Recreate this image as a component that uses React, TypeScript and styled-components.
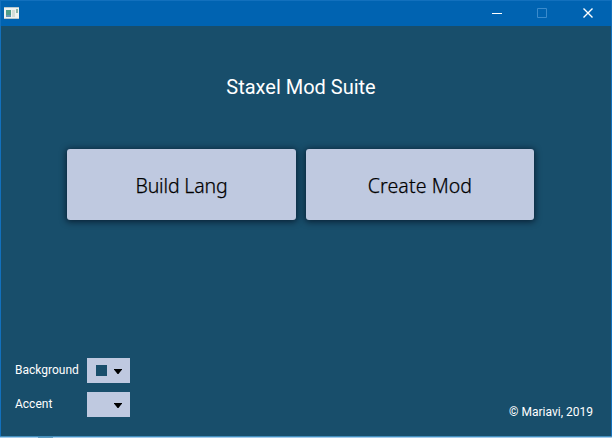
import React from 'react';
import styled, { createGlobalStyle } from 'styled-components';

const Global = createGlobalStyle`
  * { box-sizing: border-box; }
  body { margin: 0; overflow: hidden; background: #184e6b; }
`;

const Window = styled.div`
  width: 612px;
  height: 438px;
  display: flex;
  flex-direction: column;
  background: #184e6b;
  border: 1px solid #1270bd;
  border-bottom: 0;
  font-family: Roboto, sans-serif;
  color: #fff;
`;

const TitleBar = styled.header`
  height: 25px;
  flex: none;
  display: flex;
  align-items: center;
  justify-content: space-between;
  padding: 0 13px 1px 3px;
  background: #0063b1;
`;

const Controls = styled.div`
  display: flex;
  gap: 25px;
`;

const ControlButton = styled.button`
  width: 20px;
  height: 20px;
  padding: 0;
  border: 0;
  background: none;
  svg { display: block; }
  &:last-child { margin-left: 1px; }
`;

const Main = styled.main`
  flex: 1;
  display: flex;
  flex-direction: column;
  padding: 49px 77px 0 66px;
`;

const Heading = styled.h1`
  margin: 0;
  height: 24px;
  line-height: 24px;
  padding-left: 1px;
  text-align: center;
  font-size: 20px;
  font-weight: 400;
  white-space: nowrap;
`;

const Actions = styled.div`
  display: grid;
  grid-template-columns: 229px 228px;
  gap: 10px;
  margin-top: 50px;
`;

const ActionButton = styled.button<{ $tracking: string }>`
  height: 71px;
  padding: 1px 0 0;
  border: 0;
  border-radius: 3px;
  background: #bfc9e0;
  color: #000;
  box-shadow: 0 1px 6px 1px rgba(0, 10, 25, 0.65);
  font-family: "Noto Sans", sans-serif;
  font-size: 19.5px;
  font-weight: 300;
  -webkit-text-stroke: 0.25px #000;
  letter-spacing: ${(p) => p.$tracking};
`;

const Footer = styled.footer`
  flex: none;
  display: flex;
  justify-content: space-between;
  align-items: flex-end;
  padding: 0 18px 16px 14px;
`;

const Settings = styled.div`
  display: grid;
  grid-template-columns: 72px 43px;
  row-gap: 9px;
  padding-bottom: 3px;
`;

const Label = styled.label`
  font-size: 12px;
  line-height: 24px;
`;

const Picker = styled.button`
  width: 43px;
  height: 25px;
  padding: 0 8px 0 9px;
  border: 0;
  display: flex;
  align-items: center;
  justify-content: space-between;
  background: #bfc9e0;
`;

const Swatch = styled.span<{ $color: string }>`
  width: 11px;
  height: 11px;
  background: ${(p) => p.$color};
`;

const Copyright = styled.span`
  font-size: 12px;
  line-height: 16px;
`;

const BottomEdge = styled.div`
  height: 2px;
  flex: none;
  margin: 0 -1px;
  background:
    linear-gradient(#5f9bbf, #5f9bbf) 38px 1px / 15px 1px no-repeat,
    linear-gradient(#438fbd 50%, #a5cceb 50%);
`;

const AppIcon = () => (
  <svg width="15" height="12" viewBox="0 0 15 12" shapeRendering="crispEdges">
    <path fill="#eef2f0" d="M0 0h15v12H0z" />
    <path fill="#b8c8cd" d="M0 0h15v1H0zM0 11h15v1H0z" />
    <path fill="#4f9d89" d="M2 3h5v7H2z" />
    <path fill="#6596b5" d="M2 8h5v2H2z" />
    <path fill="#d3dcd7" d="M8 3h3v7H8z" />
    <path fill="#8db5a6" d="M12 2h2v4h-2z" />
  </svg>
);

const Arrow = () => (
  <svg width="8" height="7" viewBox="0 0 8 7">
    <path d="M0 2h8v.5L4.5 7h-1L0 2.5z" />
  </svg>
);

const settings = [
  { name: 'Background', color: '#184e6b' },
  { name: 'Accent', color: '#bfc9e0' },
];

export default function App() {
  return (
    <>
      <Global />
      <Window>
        <TitleBar>
          <AppIcon />
          <Controls>
            <ControlButton aria-label="Minimize">
              <svg width="20" height="20"><path d="M5 10.5h10" stroke="#fff" /></svg>
            </ControlButton>
            <ControlButton aria-label="Maximize" disabled>
              <svg width="20" height="20"><path d="M5.5 5.5h9v9h-9z" fill="none" stroke="#3b8bcc" /></svg>
            </ControlButton>
            <ControlButton aria-label="Close">
              <svg width="20" height="20"><path d="M5.5 5.5l9 9M14.5 5.5l-9 9" stroke="#fff" strokeWidth="1.4" /></svg>
            </ControlButton>
          </Controls>
        </TitleBar>
        <Main>
          <Heading>Staxel Mod Suite</Heading>
          <Actions>
            <ActionButton $tracking="-0.15px">Build Lang</ActionButton>
            <ActionButton $tracking="0.1px">Create Mod</ActionButton>
          </Actions>
        </Main>
        <Footer>
          <Settings>
            {settings.map((s) => (
              <React.Fragment key={s.name}>
                <Label>{s.name}</Label>
                <Picker aria-label={s.name}>
                  <Swatch $color={s.color} />
                  <Arrow />
                </Picker>
              </React.Fragment>
            ))}
          </Settings>
          <Copyright>© Mariavi, 2019</Copyright>
        </Footer>
        <BottomEdge />
      </Window>
    </>
  );
}
